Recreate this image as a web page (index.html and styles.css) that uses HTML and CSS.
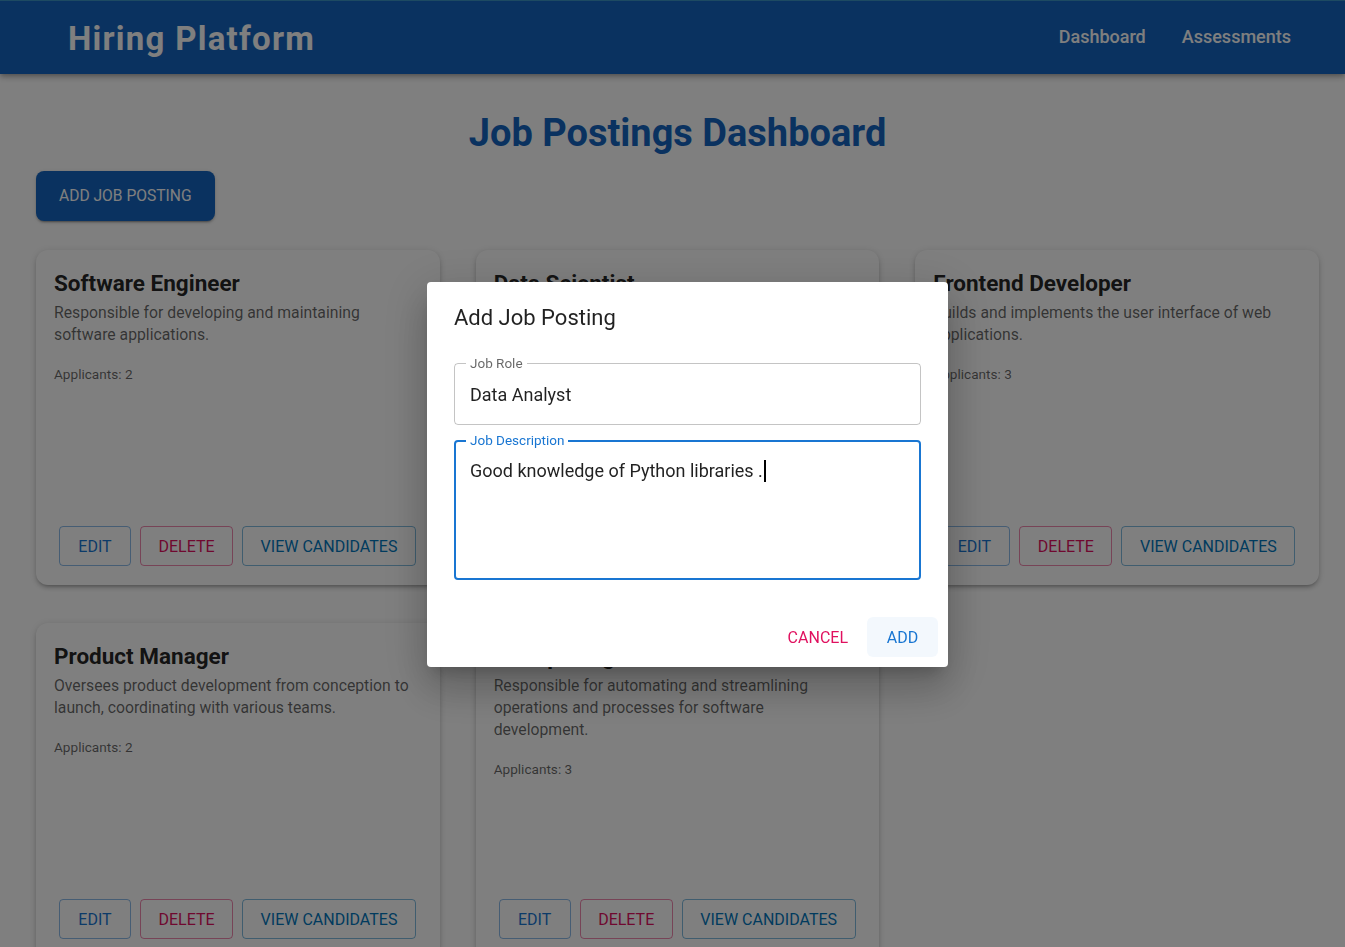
FILE: index.html
```html
<!DOCTYPE html>
<html lang="en">
<head>
<meta charset="utf-8">
<title>Hiring Platform</title>
<link rel="stylesheet" href="styles.css">
</head>
<body>
<header class="appbar">
  <div class="brand">Hiring Platform</div>
  <nav class="nav">
    <a class="nav-link">Dashboard</a>
    <a class="nav-link">Assessments</a>
  </nav>
</header>

<main class="main">
  <h1 class="page-title">Job Postings Dashboard</h1>
  <div class="toolbar">
    <button class="btn-contained">Add Job Posting</button>
  </div>

  <section class="grid">
    <article class="card">
      <div class="card-content">
        <h2 class="card-title">Software Engineer</h2>
        <p class="card-desc">Responsible for developing and maintaining software applications.</p>
        <p class="card-meta">Applicants: 2</p>
      </div>
      <div class="card-actions">
        <button class="btn-outlined primary">Edit</button>
        <button class="btn-outlined danger">Delete</button>
        <button class="btn-outlined info">View Candidates</button>
      </div>
    </article>

    <article class="card">
      <div class="card-content">
        <h2 class="card-title">Data Scientist</h2>
        <p class="card-desc">Analyzes complex data sets to provide insights for business decisions.</p>
        <p class="card-meta">Applicants: 4</p>
      </div>
      <div class="card-actions">
        <button class="btn-outlined primary">Edit</button>
        <button class="btn-outlined danger">Delete</button>
        <button class="btn-outlined info">View Candidates</button>
      </div>
    </article>

    <article class="card">
      <div class="card-content">
        <h2 class="card-title">Frontend Developer</h2>
        <p class="card-desc">Builds and implements the user interface of web applications.</p>
        <p class="card-meta">Applicants: 3</p>
      </div>
      <div class="card-actions">
        <button class="btn-outlined primary">Edit</button>
        <button class="btn-outlined danger">Delete</button>
        <button class="btn-outlined info">View Candidates</button>
      </div>
    </article>

    <article class="card">
      <div class="card-content">
        <h2 class="card-title">Product Manager</h2>
        <p class="card-desc">Oversees product development from conception to launch, coordinating with various teams.</p>
        <p class="card-meta">Applicants: 2</p>
      </div>
      <div class="card-actions">
        <button class="btn-outlined primary">Edit</button>
        <button class="btn-outlined danger">Delete</button>
        <button class="btn-outlined info">View Candidates</button>
      </div>
    </article>

    <article class="card">
      <div class="card-content">
        <h2 class="card-title">DevOps Engineer</h2>
        <p class="card-desc">Responsible for automating and streamlining operations and processes for software development.</p>
        <p class="card-meta">Applicants: 3</p>
      </div>
      <div class="card-actions">
        <button class="btn-outlined primary">Edit</button>
        <button class="btn-outlined danger">Delete</button>
        <button class="btn-outlined info">View Candidates</button>
      </div>
    </article>
  </section>
</main>

<div class="backdrop">
  <div class="dialog" role="dialog">
    <h2 class="dialog-title">Add Job Posting</h2>
    <div class="dialog-body">
      <div class="field">
        <span class="field-label">Job Role</span>
        <div class="field-value">Data Analyst</div>
      </div>
      <div class="field field-focused field-multiline">
        <span class="field-label">Job Description</span>
        <div class="field-value">Good knowledge of Python libraries .<span class="caret"></span></div>
      </div>
    </div>
    <div class="dialog-actions">
      <button class="btn-text danger">Cancel</button>
      <button class="btn-text primary hovered">Add</button>
    </div>
  </div>
</div>
</body>
</html>
```

FILE: styles.css
```css
* { box-sizing: border-box; }

html, body {
  margin: 0;
  padding: 0;
  height: 100%;
  overflow: hidden;
}

body {
  font-family: Roboto, "Liberation Sans", Arial, sans-serif;
  background: #ffffff;
  color: rgba(0, 0, 0, 0.87);
}

button {
  font-family: inherit;
  cursor: pointer;
}

/* App bar */
.appbar {
  height: 74px;
  background: #1565c0;
  border-top: 1px solid #3a95c5;
  display: flex;
  align-items: center;
  justify-content: space-between;
  padding: 0 54px 0 68px;
  box-shadow: 0 2px 4px -1px rgba(0,0,0,.2), 0 4px 5px 0 rgba(0,0,0,.14), 0 1px 10px 0 rgba(0,0,0,.12);
}

.brand {
  color: #ffffff;
  font-size: 33px;
  font-weight: 700;
  letter-spacing: 1.25px;
  line-height: 1;
  padding-top: 2px;
}

.nav {
  display: flex;
  gap: 36px;
  padding-bottom: 2px;
}

.nav-link {
  color: #ffffff;
  font-size: 18px;
  font-weight: 500;
}

/* Main */
.main {
  padding: 36px 26px 0 36px;
}

.page-title {
  margin: 0;
  text-align: center;
  color: #1565c0;
  font-size: 38px;
  font-weight: 700;
  line-height: 46px;
}

.toolbar {
  margin-top: 15px;
}

.btn-contained {
  height: 50px;
  padding: 0 23px;
  border: none;
  border-radius: 8px;
  background: #1565c0;
  color: #ffffff;
  font-size: 15.6px;
  font-weight: 400;
  text-transform: uppercase;
  box-shadow: 0 3px 1px -2px rgba(0,0,0,.2), 0 2px 2px 0 rgba(0,0,0,.14), 0 1px 5px 0 rgba(0,0,0,.12);
}

.grid {
  margin-top: 29px;
  display: grid;
  grid-template-columns: repeat(3, 1fr);
  gap: 38px 36px;
}

.card {
  min-height: 335px;
  background: #ffffff;
  border-radius: 12px;
  display: flex;
  flex-direction: column;
  box-shadow: 0 3px 3px -2px rgba(0,0,0,.2), 0 3px 4px 0 rgba(0,0,0,.14), 0 1px 8px 0 rgba(0,0,0,.12);
}

.card-content {
  padding: 17px 18px 0 18px;
}

.card-title {
  margin: 0;
  font-size: 22.5px;
  font-weight: 700;
  line-height: 32px;
  color: rgba(0, 0, 0, 0.87);
}

.card-desc {
  margin: 3px 0 0;
  font-size: 15.75px;
  line-height: 22px;
  color: rgba(0, 0, 0, 0.6);
}

.card-meta {
  margin: 18px 0 0;
  font-size: 13.6px;
  line-height: 20px;
  color: rgba(0, 0, 0, 0.6);
}

.card-actions {
  margin-top: auto;
  padding: 0 23px 19px 23px;
  display: flex;
  gap: 9px;
}

.btn-outlined {
  height: 40px;
  min-width: 72px;
  padding: 0 17.5px;
  background: transparent;
  border: 1px solid;
  border-radius: 4px;
  font-size: 16px;
  font-weight: 400;
  text-transform: uppercase;
}

.btn-outlined.primary { color: #1976d2; border-color: rgba(25, 118, 210, 0.5); }
.btn-outlined.danger { color: #e0115f; border-color: rgba(224, 17, 95, 0.5); }
.btn-outlined.info { color: #0277bd; border-color: rgba(2, 119, 189, 0.5); }

/* Modal */
.backdrop {
  position: fixed;
  inset: 0;
  background: rgba(0, 0, 0, 0.5);
  display: flex;
  align-items: center;
  justify-content: center;
  padding: 2px 0 0 30px;
}

.dialog {
  width: 521px;
  height: 385px;
  background: #ffffff;
  border-radius: 4px;
  display: flex;
  flex-direction: column;
  box-shadow: 0 11px 15px -7px rgba(0,0,0,.2), 0 24px 38px 3px rgba(0,0,0,.14), 0 9px 46px 8px rgba(0,0,0,.12);
}

.dialog-title {
  margin: 0;
  padding: 20px 27px 0 27px;
  font-size: 22px;
  font-weight: 400;
  line-height: 32px;
  color: rgba(0, 0, 0, 0.87);
}

.dialog-body {
  padding: 29px 27px 0 27px;
  display: flex;
  flex-direction: column;
  gap: 15px;
}

.field {
  position: relative;
  height: 62px;
  border: 1px solid rgba(0, 0, 0, 0.23);
  border-radius: 4px;
  display: flex;
  align-items: center;
  padding: 1px 15px 0;
}

.field-label {
  position: absolute;
  top: -10px;
  left: 11px;
  padding: 0 4px;
  background: #ffffff;
  font-size: 13.5px;
  line-height: 18px;
  color: rgba(0, 0, 0, 0.6);
}

.field-value {
  font-size: 18px;
  line-height: 26px;
  color: rgba(0, 0, 0, 0.87);
  display: flex;
  align-items: center;
}

.field-focused {
  border: 2px solid #1976d2;
  padding: 0 14px;
}

.field-focused .field-label {
  color: #1976d2;
  top: -11px;
  left: 10px;
}

.field-multiline {
  height: 140px;
  align-items: flex-start;
  padding-top: 16px;
}

.caret {
  display: inline-block;
  width: 2px;
  height: 22px;
  margin-left: 1px;
  background: #000000;
}

.dialog-actions {
  margin-top: auto;
  padding: 0 10px 10px 10px;
  display: flex;
  justify-content: flex-end;
  gap: 0;
}

.btn-text {
  height: 40px;
  padding: 0 19px;
  background: transparent;
  border: none;
  border-radius: 6px;
  font-size: 16px;
  font-weight: 400;
  text-transform: uppercase;
}

.btn-text.primary { color: #1976d2; }
.btn-text.danger { color: #e0115f; }
.btn-text.hovered { background: rgba(25, 118, 210, 0.05); min-width: 71px; }
```
